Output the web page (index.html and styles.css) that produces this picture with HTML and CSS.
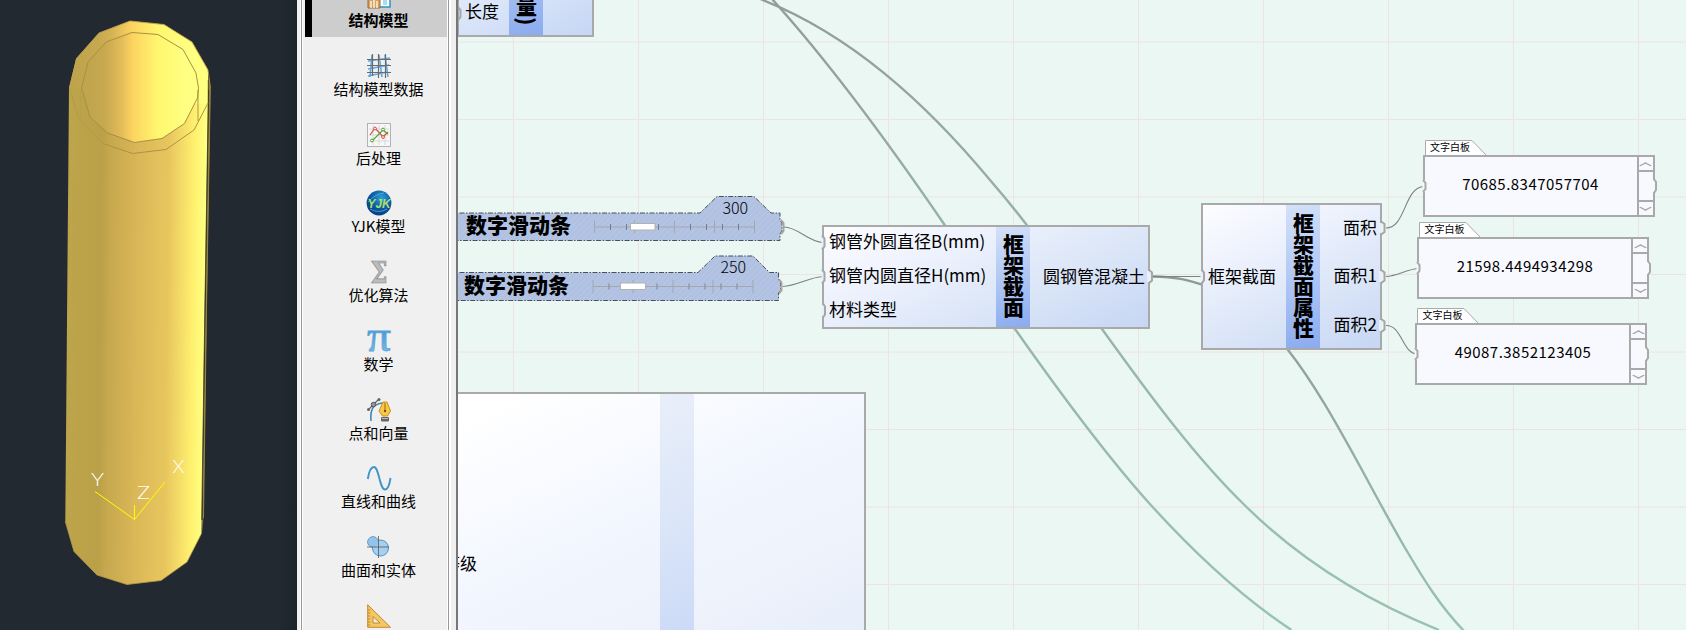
FILE: index.html
```html
<!DOCTYPE html>
<html lang="zh-CN">
<head>
<meta charset="utf-8">
<title>结构模型</title>
<link rel="stylesheet" href="styles.css">
</head>
<body>
<div class="app">
  <section class="viewport">
    <svg class="scene" viewBox="0 0 297 630">
      <defs>
        <linearGradient id="body" gradientUnits="userSpaceOnUse" x1="70" y1="0" x2="210" y2="0" gradientTransform="skewX(-0.6)">
          <stop offset="0" stop-color="#bda54b"/>
          <stop offset=".24" stop-color="#baa048"/>
          <stop offset=".3" stop-color="#c6a84e"/>
          <stop offset=".5" stop-color="#dab757"/>
          <stop offset=".72" stop-color="#e8c65e"/>
          <stop offset=".9" stop-color="#fff06f"/>
          <stop offset=".98" stop-color="#ffff80"/>
        </linearGradient>
        <linearGradient id="face" gradientUnits="userSpaceOnUse" x1="70" y1="0" x2="210" y2="0">
          <stop offset="0" stop-color="#bda34c"/>
          <stop offset=".2" stop-color="#c6a84f"/>
          <stop offset=".3" stop-color="#d5b355"/>
          <stop offset=".44" stop-color="#fcd35f"/>
          <stop offset=".64" stop-color="#fff76f"/>
          <stop offset=".85" stop-color="#ffff80"/>
        </linearGradient>
        <linearGradient id="hole" gradientUnits="userSpaceOnUse" x1="81" y1="0" x2="198" y2="0">
          <stop offset="0" stop-color="#bea44d"/>
          <stop offset=".2" stop-color="#c6a84f"/>
          <stop offset=".35" stop-color="#e3bd59"/>
          <stop offset=".44" stop-color="#fcd35f"/>
          <stop offset=".66" stop-color="#fff76f"/>
          <stop offset=".9" stop-color="#ffff82"/>
        </linearGradient>
      </defs>
      <path d="M207 72 210.500 87 206.500 320 203.500 518 202 533 Z" fill="#8d7938"/>
      <path d="M208.500 90 205 320 202 520" fill="none" stroke="#36352b"/>
      <path d="M69 88 76 59 99 33 130 21 164 24.500 192 42 208 70 208 100 204.500 320 201.500 533.500 187 562 161 580.500 127 584.500 97 575 74 551.500 65.300 521.500 67 320Z" fill="url(#body)"/>
      <path d="M69 88 76 59 99 33 130 21 164 24.500 192 42 208 70 208 104 198 104Z" fill="url(#face)"/>
      <path d="M76 59 99 33 130 21 164 24.500 192 42 208 70 210.300 87" fill="none" stroke="#b59b49" stroke-width=".9"/>
      <path d="M65.300 521.500 74 551.500 97 575 127 584.500 161 580.500 187 562 201.500 533.500" fill="none" stroke="#b59b49" stroke-width=".8"/>
      <path d="M210.300 87 206.300 320 203.500 518" fill="none" stroke="#a38b40" stroke-width=".9"/>
      <path d="M208.300 80 208.200 105 204.700 320 201.700 520" fill="none" stroke="#3f3d2c" stroke-width=".8"/>
      <path d="M132 32.500 158 34.500 183 49.500 196 73 198.500 88 197.500 98 184.500 123.500 162 138.500 134.500 142.500 107.500 133 90 117 81.500 88 88 62 106 42Z" fill="url(#hole)" stroke="#a98f45"/>
      <path d="M69.500 88 79 119.500 103 143.500" fill="none" stroke="#ad9444" stroke-width=".6"/>
      <path d="M103 143.500 132.500 153.500 166 149.500 194 130 208 103M198 90V121" fill="none" stroke="#ad9244"/>
      <path d="M80.500 90V120" stroke="#b29848" stroke-width=".5"/>
      <path d="M95 491.500 134.500 519.500 165 482M134.500 519.500V505" fill="none" stroke="#ff0"/>
      <g class="axis-name">
        <text x="172.500" y="472.500" textLength="12" lengthAdjust="spacingAndGlyphs">X</text>
        <text x="91" y="486" textLength="13" lengthAdjust="spacingAndGlyphs">Y</text>
        <text x="137" y="499" textLength="13" lengthAdjust="spacingAndGlyphs">Z</text>
      </g>
    </svg>
  </section>

  <nav class="sidebar">
    <ul class="menu">
      <li class="item item-active">
        <svg class="icon" viewBox="0 0 24 24"><rect x="10" y="2" width="13" height="20" fill="#fff" stroke="#2695c9" stroke-width="1.500"/><rect x="16" y="13" width="4" height="7" fill="#aadcf5"/><path d="M0 15 6 10 13 15V23H1V15" fill="#d3a367" stroke="#9a6a36"/><path d="M4 16V23M7 14V23M10 16V23" stroke="#fff0d2" stroke-width="1.500"/></svg>
        <span>结构模型</span></li>
      <li class="item">
        <svg class="icon" viewBox="0 0 24 24"><path d="M1 7 23 4M1 15 22 11M1 22 20 18M5 1 3 23M12 1 15 23M18 1 21 23" stroke="#64a5e0" stroke-width="1.600" fill="none"/><path d="M0 5.500H24M0 11.500H24M0 18.500H24M5.500 0V22M11.500 0V24M18.500 0V24" stroke="#6b6b6b" stroke-width="1.200"/></svg>
        <span>结构模型数据</span></li>
      <li class="item">
        <svg class="icon" viewBox="0 0 24 24"><rect x=".5" y=".5" width="23" height="23" fill="#f7f7f7" stroke="#b2b2b2"/><path d="M2 6H22M2 12H22M2 18H22M6 2V22M12 2V22M18 2V22" stroke="#d8d8d8"/><path d="M3 12 8 5 16 14 21 9" fill="none" stroke="#dc4b48" stroke-width="1.200"/><path d="M5 18 16 7 21 11" fill="none" stroke="#4ba629" stroke-width="1.200"/><g fill="#fff"><circle cx="8" cy="5.500" r="1.400" stroke="#dc4b48"/><circle cx="16" cy="14" r="1.400" stroke="#dc4b48"/><circle cx="5" cy="17.500" r="1.400" stroke="#4ba629"/><circle cx="16" cy="6.500" r="1.400" stroke="#4ba629"/></g></svg>
        <span>后处理</span></li>
      <li class="item">
        <svg class="icon" viewBox="0 0 24 24"><defs><radialGradient id="globe" cx=".6" cy=".3" r=".7"><stop offset="0" stop-color="#2aa0d8"/><stop offset=".6" stop-color="#0b5aa2"/><stop offset="1" stop-color="#093f83"/></radialGradient></defs><circle cx="12" cy="12" r="12.400" fill="url(#globe)"/><path d="M1 11Q8 3 17 2M3 18Q12 23 20 18" fill="none" stroke="#63b9e2" stroke-width=".7"/><text class="logo" x="12" y="17" textLength="23" lengthAdjust="spacingAndGlyphs">YJK</text></svg>
        <span>YJK模型</span></li>
      <li class="item">
        <svg class="icon" viewBox="0 0 24 24"><text class="sigma" x="12" y="22.500" textLength="17" lengthAdjust="spacingAndGlyphs">Σ</text></svg>
        <span>优化算法</span></li>
      <li class="item">
        <svg class="icon" viewBox="0 0 24 24"><defs><linearGradient id="pi" x1="0" y1="0" x2="0" y2="1"><stop offset=".3" stop-color="#3d90cc"/><stop offset="1" stop-color="#8cc8f3"/></linearGradient></defs><text class="pi" x="12" y="22" textLength="24" lengthAdjust="spacingAndGlyphs">π</text></svg>
        <span>数学</span></li>
      <li class="item">
        <svg class="icon" viewBox="0 0 24 24"><path d="M4 23C3 11 6 6 16 5" fill="none" stroke="#3f88b8" stroke-width="1.600"/><path d="M1 12 12 1" stroke="#666" stroke-width="1.200"/><circle cx="6.500" cy="6.500" r="2.200" fill="#999" stroke="#555"/><circle cx="1.500" cy="11.500" r="1.500" fill="#666"/><circle cx="12" cy="1.500" r="1.500" fill="#666"/><path d="M16 4H20L23.500 13 20.500 18H15.500L12 13Z" fill="#f8c847" stroke="#cf8e1c"/><path d="M18 5V13" stroke="#9b6b16"/><circle cx="18" cy="13" r="1.200" fill="#77500c"/><rect x="14" y="19" width="8" height="4.500" rx="1" fill="#666"/><path d="M15 20.500H21" stroke="#bbb"/></svg>
        <span>点和向量</span></li>
      <li class="item">
        <svg class="icon" viewBox="0 0 24 24"><path d="M.8 13C2 5 4.500 1 7 1 12 1 12.500 23.500 18 23.500 21 23.500 22.500 19 23.500 12" fill="none" stroke="#3f95c6" stroke-width="1.900"/></svg>
        <span>直线和曲线</span></li>
      <li class="item">
        <svg class="icon" viewBox="0 0 24 24"><g fill="#a5d0f2" stroke="#5791be"><circle cx="6" cy="7" r="5.300"/><circle cx="13.500" cy="13" r="8"/></g><circle cx="6.400" cy="7.400" r="4.700" fill="#93c3eb"/><path d="M0 12H22M11.500 1V23" stroke="#555" stroke-width=".8"/></svg>
        <span>曲面和实体</span></li>
      <li class="item">
        <svg class="icon" viewBox="0 0 24 24"><path d="M.7.700V23.300H23.500Z M6 12.500 13 19H6Z" fill="#f5c664" fill-rule="evenodd" stroke="#c28a2b"/><path d="M1 6H3.500M1 9H3.500M1 12H3.500M1 15H3.500M1 18H3.500M1 21H3.500" stroke="#a8731e" stroke-width=".7"/></svg>
      </li>
    </ul>
  </nav>

  <main class="canvas">
    <svg class="layer" viewBox="458 0 1228 630">
      <defs>
        <linearGradient id="wire" gradientUnits="userSpaceOnUse" x1="0" y1="0" x2="0" y2="630">
          <stop offset="0" stop-color="#919d9a"/>
          <stop offset=".35" stop-color="#97b1a5"/>
          <stop offset="1" stop-color="#98c3b0"/>
        </linearGradient>
        <linearGradient id="wire-late" gradientUnits="userSpaceOnUse" x1="0" y1="276" x2="0" y2="630">
          <stop offset="0" stop-color="#8d9996"/>
          <stop offset="1" stop-color="#98c3b0"/>
        </linearGradient>
      </defs>
      <path d="M513.500 0V630M638.500 0V630M763.500 0V630M888.500 0V630M1013.500 0V630M1138.500 0V630M1263.500 0V630M1388.500 0V630M1513.500 0V630M1638.500 0V630M458 42H1686M458 119.500H1686M458 197H1686M458 274.500H1686M458 352H1686M458 429.500H1686M458 507H1686M458 584.500H1686" stroke="#efe2e4" fill="none"/>
      <g fill="none" stroke="url(#wire)" stroke-width="2.400">
        <path d="M772 -1C829 62 890 145 944 224L1015 329C1060 393 1104 453 1149 503 1196 555 1243 598 1291.500 630"/>
        <path d="M760 -1C850 34 925 102 990 180Q1009 202 1026 224L1102 329C1148 393 1195 457 1244.500 505 1305 565 1372 603 1439 630"/>
        <path stroke="url(#wire-late)" d="M1153 276.500C1180 277 1190 281 1202 284.500 1240 298 1264 320 1288 350 1315 384 1341 432 1362 470 1376 496 1390 522 1404.500 547 1424 580 1440 606 1464 631"/>
      </g>
    </svg>

    <div class="node node-length">
      <div class="ins"><span>长度</span></div><div class="band"><b>量)</b></div><div class="outs"></div>
    </div>

    <div class="node node-section">
      <div class="ins"><span>钢管外圆直径B(mm)</span><span>钢管内圆直径H(mm)</span><span>材料类型</span></div>
      <div class="band"><b>框架截面</b></div>
      <div class="outs"><span>圆钢管混凝土</span></div>
    </div>

    <div class="node node-props">
      <div class="ins"><span>框架截面</span></div>
      <div class="band"><b>框架截面属性</b></div>
      <div class="outs"><span>面积</span><span>面积1</span><span>面积2</span></div>
    </div>

    <div class="node node-big">
      <div class="ins"><span>等级</span></div><div class="band"></div><div class="outs"></div>
    </div>

    <svg class="layer" viewBox="458 0 1228 630">
      <defs>
        <pattern id="hatch" width="6" height="6" patternUnits="userSpaceOnUse"><rect width="6" height="6" fill="#b0c1e2"/><path d="M0 6 6 0" stroke="#bac9e8" stroke-width=".8"/></pattern>
      </defs>
      <g fill="url(#hatch)" stroke="#4b4f57" stroke-dasharray="5 1.500 1.500 1.500">
        <path d="M450 213H700L717 196.500H754L771 213H780V220L782 223V231L780 234V240.500H450Z"/>
        <path d="M450 272.500H698L715 256H753L769.500 272.500H778.500V279L780.500 282V290L778.500 293V300.500H450Z"/>
      </g>
      <g stroke="#9298a4" fill="none">
        <path d="M594.500 227H754.500M594.500 220.500V233M634.500 220.500V233M674.500 220.500V233M714.500 220.500V233M754.500 220.500V233" stroke="#a4a7ad"/>
        <path d="M610.500 224V230M626.500 224V230M658.500 224V230M690.500 224V230M706.500 224V230M722.500 224V230M738.500 224V230" stroke="#777d88"/>
        <path d="M593 286.500H753M593 280V293M633 280V293M673 280V293M713 280V293M753 280V293" stroke="#a4a7ad"/>
        <path d="M609 283.500V289.500M657 283.500V289.500M689 283.500V289.500M705 283.500V289.500M721 283.500V289.500M737 283.500V289.500" stroke-width="1.500"/>
      </g>
      <g fill="#fff" stroke="#b2b2b2"><rect x="630.500" y="223.500" width="24.500" height="6.500"/><rect x="620.500" y="283" width="25" height="6.500"/></g>
      <g class="slider-name"><text x="466" y="232.500">数字滑动条</text><text x="464" y="292.500">数字滑动条</text></g>
      <g class="slider-value"><text x="722.500" y="213.500">300</text><text x="720.500" y="273">250</text></g>

      <g fill="none" stroke="#7d8281" stroke-width="1.100">
        <path d="M784 227C798 227 808 242 823 242.500"/>
        <path d="M783 286.500C796 286 810 277 823 276.500"/>
        <path d="M1153 276.500H1203"/>
        <path d="M1386 228C1406 228 1404 187 1424 186.500"/>
        <path d="M1386 276.500C1398 276 1407 269 1419 268.500"/>
        <path d="M1386 325.500C1402 325 1402 353 1417 354"/>
      </g>
      <g class="port-gaps">
        <path d="M823 237V248M823 271V282M823 305V316M1148.500 271V282M1202 271V282M1380.500 223V233M1380.500 271V282M1380.500 320V331"/>
      </g>
      <g class="ports">
        <path d="M781 220 783.500 223V231L781 234M779 279.500 781.500 282.500V290.500L779 293.500"/>
        <path d="M458 7 460.500 10V17L458 20"/>
        <path d="M822 235.500 824.500 238.500V246.500L822 249.500M822 269.500 824.500 272.500V280.500L822 283.500M823 303.500 825 306.500V314.500L823 317.500"/>
        <path d="M1148.500 269.500 1152 272.500V280.500L1148.500 283.500M1201.500 269.500 1204 272.500V280.500L1201.500 283.500"/>
        <path d="M1380.500 221 1384.500 224V232L1380.500 235M1380.500 269.500 1384.500 272.500V280.500L1380.500 283.500M1380.500 318.500 1384.500 321.500V329.500L1380.500 332.500"/>
      </g>
    </svg>

    <article class="board board-1">
      <header class="tab"><svg class="tab-shape" viewBox="0 0 62 16"><path d="M.5 16V.5H47L61.500 15.500"/></svg><span>文字白板</span></header>
      <div class="frame"><output>70685.8347057704</output><div class="scroll"><i class="up"></i><i class="down"></i></div></div>
      <svg class="ends" viewBox="0 0 240 20"><path class="gap" d="M1 4V16"/><path d="M0 4 2.500 7V13L0 16"/><path class="gap" d="M231 4V16"/><path d="M231 3 233 6V14L231 17"/></svg>
    </article>
    <article class="board board-2">
      <header class="tab"><svg class="tab-shape" viewBox="0 0 62 16"><path d="M.5 16V.5H47L61.500 15.500"/></svg><span>文字白板</span></header>
      <div class="frame"><output>21598.4494934298</output><div class="scroll"><i class="up"></i><i class="down"></i></div></div>
      <svg class="ends" viewBox="0 0 240 20"><path class="gap" d="M1 4V16"/><path d="M0 4 2.500 7V13L0 16"/><path class="gap" d="M231 4V16"/><path d="M231 3 233 6V14L231 17"/></svg>
    </article>
    <article class="board board-3">
      <header class="tab"><svg class="tab-shape" viewBox="0 0 62 16"><path d="M.5 16V.5H47L61.500 15.500"/></svg><span>文字白板</span></header>
      <div class="frame"><output>49087.3852123405</output><div class="scroll"><i class="up"></i><i class="down"></i></div></div>
      <svg class="ends" viewBox="0 0 240 20"><path class="gap" d="M1 4V16"/><path d="M0 4 2.500 7V13L0 16"/><path class="gap" d="M231 4V16"/><path d="M231 3 233 6V14L231 17"/></svg>
    </article>
  </main>
</div>
</body>
</html>
```

FILE: styles.css
```css
* { box-sizing: border-box; }
body {
  margin: 0;
  font-family: "Noto Sans CJK SC", "Noto Sans", sans-serif;
  color: #000;
  overflow: hidden;
}
.app { display: flex; width: 1686px; height: 630px; overflow: hidden; }

/* 3D viewport */
.viewport { width: 297px; flex: none; background: linear-gradient(90deg, #222931 94%, #1c242b); }
.scene { display: block; width: 297px; height: 630px; }
.axis-name { font: 300 17px Lato, sans-serif; fill: #fff; }

/* category sidebar */
.sidebar {
  flex: none;
  width: 161px;
  padding: 0 7px 0 4px;
  background: #f0f0f0;
  border-right: 2px solid #777;
}
.menu {
  list-style: none;
  margin: 0;
  padding: 0 1px 0 2px;
  height: 630px;
  border-left: 1px solid #999;
  border-right: 1px solid #9a9a9a;
  box-shadow: inset 1px 0 #fff, inset -1px 0 #fff, 2px 0 #fff, -1px 0 #fff;
  overflow: hidden;
}
.item {
  height: 68.75px;
  padding-top: 17px;
  margin-left: 1px;
  display: flex;
  flex-direction: column;
  align-items: center;
  font-size: 15px;
  line-height: 22px;
  white-space: nowrap;
}
.item-active {
  margin-top: -32px;
  background: #cdcdcd;
  box-shadow: inset 7px 0 #000;
  font-weight: 700;
}
.icon { width: 24px; height: 24px; flex: none; overflow: visible; margin-left: 5px; }
.item span { margin-left: 5px; }
.logo { font: italic 700 12px "Liberation Sans", sans-serif; fill: #a9dd70; text-anchor: middle; }
.sigma { font: 700 29px "DejaVu Serif", serif; fill: #bcbcbc; stroke: #858585; stroke-width: .7px; text-anchor: middle; }
.pi { font: 400 45px "Liberation Serif", serif; fill: url(#pi); stroke: #5ba4da; stroke-width: .8px; text-anchor: middle; }

/* node canvas */
.canvas { position: relative; flex: 1; height: 630px; background: #ebf7f3; overflow: hidden; }
.layer { position: absolute; left: 0; top: 0; width: 1228px; height: 630px; }

.node {
  position: absolute;
  display: flex;
  border: 2px solid #a9a9a9;
  background: linear-gradient(155deg, #fdfdff, #f1f4fe 25%, #dae5f7 65%, #c6d6f4);
  font-size: 17px;
  line-height: 24px;
  white-space: nowrap;
}
.ins, .outs { display: flex; flex-direction: column; justify-content: center; padding-bottom: 2px; }
.outs { flex: 1; align-items: flex-end; }
.band {
  width: 34px;
  flex: none;
  display: flex;
  align-items: center;
  justify-content: center;
  padding-bottom: 2px;
  background: linear-gradient(165deg, #d3e1f8, #b4caf5 45%, #8aabef);
}
.band b { writing-mode: vertical-rl; font-size: 21px; line-height: 33px; font-weight: 900; }

.node-length { left: 0; top: -110px; width: 136px; height: 147px; border-left-width: 1px; background: linear-gradient(155deg, #fdfdff, #dbe6f9 60%, #c6d6f4); }
.node-length .ins { width: 50px; padding-left: 6px; justify-content: flex-end; padding-bottom: 12px; }
.node-length .band { align-items: flex-end; padding-bottom: 10px; }

.node-section { left: 364px; top: 224.500px; width: 328px; height: 104px; }
.node-section .ins { width: 172px; padding-left: 5px; padding-bottom: 3px; gap: 10px; }
.node-section .outs { padding-right: 3px; }

.node-props { left: 743px; top: 203px; width: 181px; height: 147px; }
.node-props .ins { width: 83px; padding-left: 5px; }
.node-props .outs { padding-right: 3px; padding-bottom: 3px; gap: 24.500px; }

.node-big { left: -160px; top: 392px; width: 567.500px; height: 420px; background: linear-gradient(155deg, #fff 15%, #f2f6fe 42%, #edf2fb 60%, #dde6f8); }
.node-big .ins { width: 360px; align-items: flex-end; justify-content: flex-start; padding: 157px 183px 0 0; }
.node-big .band { background: linear-gradient(160deg, #e9eff9, #d9e4f8 35%, #c5d5f6 70%, #b4c9f4); }

.slider-name { font-size: 21px; font-weight: 900; }
.slider-value { font-size: 16px; font-weight: 300; }
.ports { fill: none; stroke: #a6a6a6; stroke-width: 2px; }
.port-gaps { fill: none; stroke: #e9eff8; stroke-width: 3px; }

/* text boards */
.board { position: absolute; width: 240px; height: 78px; }
.board-1 { left: 964.500px; top: 140px; }
.board-2 { left: 959px; top: 222px; }
.board-3 { left: 957px; top: 308px; }
.tab { position: relative; height: 15px; margin-left: 2px; padding-left: 5.500px; font-size: 10px; line-height: 14px; }
.tab span { position: relative; }
.tab-shape { position: absolute; left: 0; top: 0; width: 62px; height: 16px; fill: #fff; stroke: #aaa; }
.frame { position: relative; display: flex; width: 232px; height: 62px; border: 2px solid #a9a9a9; background: #f8f9fe; }
.frame output { flex: 1; text-align: center; font-size: 15px; letter-spacing: .48px; line-height: 54px; }
.scroll { width: 16px; border-left: 2px solid #a9a9a9; display: flex; flex-direction: column; justify-content: space-between; }
.scroll i { height: 15px; display: flex; align-items: center; justify-content: center; }
.scroll i::before { content: ""; width: 7px; height: 7px; border: solid #a9a9a9; border-width: 2px 0 0 2px; transform: translateY(2px) scaleY(.5) rotate(45deg); }
.scroll .up { border-bottom: 2px solid #a9a9a9; }
.scroll .down { border-top: 2px solid #a9a9a9; }
.scroll .down::before { transform: translateY(-1px) scaleY(.5) rotate(225deg); }
.ends { position: absolute; left: 0; top: 36px; width: 240px; height: 20px; fill: none; stroke: #a9a9a9; stroke-width: 2px; overflow: visible; }
.ends .gap { stroke: #f8f9fe; stroke-width: 3px; }
```
